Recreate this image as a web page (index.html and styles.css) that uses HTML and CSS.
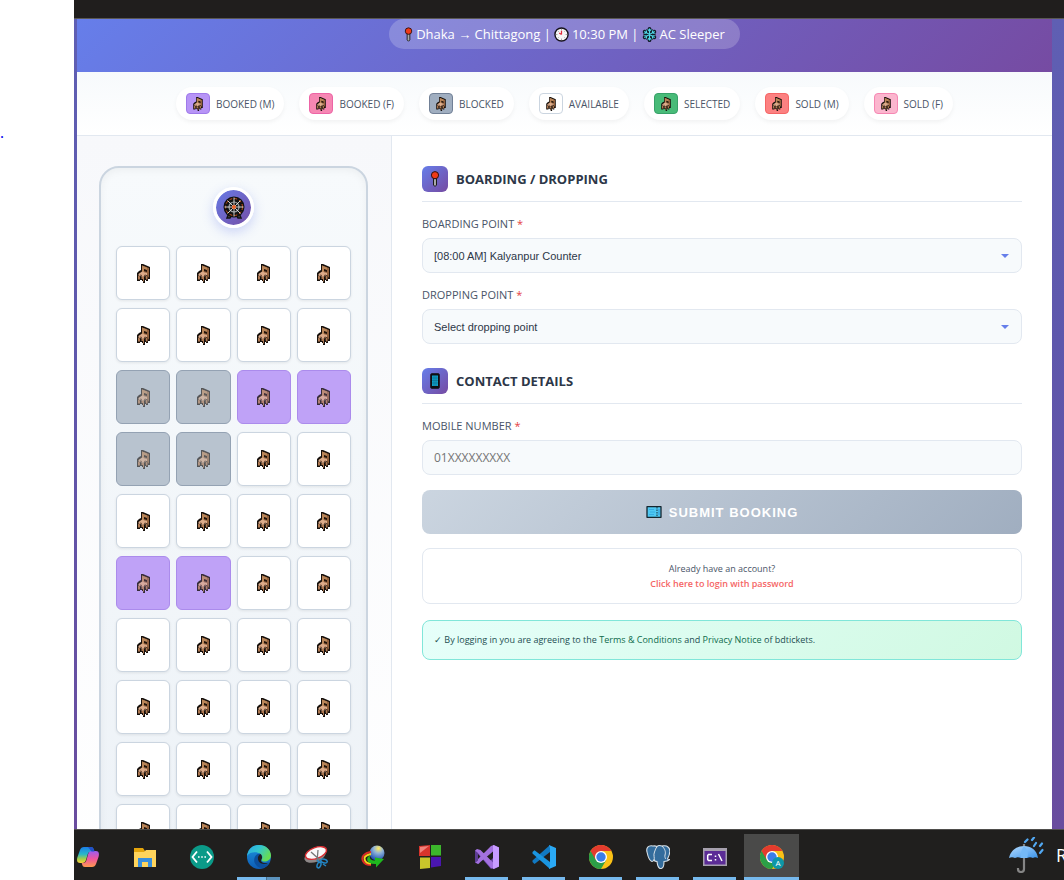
FILE: index.html
```html
<!DOCTYPE html>
<html lang="en">
<head>
<meta charset="utf-8">
<title>Seat booking</title>
<link rel="stylesheet" href="styles.css">
</head>
<body>
<svg class="defs" aria-hidden="true">
  <defs>
    <linearGradient id="copA" x1="0" y1="0" x2="0" y2="1"><stop offset="0" stop-color="#1b7ee8"/><stop offset=".45" stop-color="#27b7c9"/><stop offset=".75" stop-color="#a5cf45"/><stop offset="1" stop-color="#ffd23c"/></linearGradient>
    <linearGradient id="copB" x1="0" y1="0" x2="0" y2="1"><stop offset="0" stop-color="#9c5cf0"/><stop offset=".5" stop-color="#f0569c"/><stop offset="1" stop-color="#ff9a4d"/></linearGradient>
    <linearGradient id="edgeA" x1="0" y1="0" x2="1" y2=".5"><stop offset="0" stop-color="#2aa6e8"/><stop offset=".5" stop-color="#33c6cf"/><stop offset="1" stop-color="#66dd53"/></linearGradient>
    <linearGradient id="edgeB" x1="0" y1="0" x2="0" y2="1"><stop offset="0" stop-color="#1c93e0"/><stop offset="1" stop-color="#0d5cb4"/></linearGradient>
    <linearGradient id="umb" x1="0" y1="0" x2="1" y2="1"><stop offset="0" stop-color="#b5dcff"/><stop offset="1" stop-color="#3c94ea"/></linearGradient>
    <radialGradient id="globe" cx=".6" cy=".2" r=".8"><stop offset="0" stop-color="#ffe95e"/><stop offset=".4" stop-color="#8fb2d8"/><stop offset="1" stop-color="#1d4db0"/></radialGradient>
  </defs>
  <symbol id="chair" viewBox="0 0 13 19">
    <path d="M4 0h2l7 3v12h-2v2H9v-1H8v3H6v-2H5v-1H3v1H0v-8l2-2 2-1z" fill="#16100c"/>
    <path d="M5 1.500L12 4v10l-2-3-1-2-4-1z" fill="#93613c"/>
    <path d="M5 1.500l5 2v3L7 5v3H5z" fill="#b98558"/>
    <path d="M7 5l3 1v2L7 7z" fill="#20140c"/>
    <path d="M1.500 10L5 7.500l5 1.500v2l-4 2-4.500-1.500z" fill="#dcab89"/>
    <path d="M1 11.500l2 1v3H1zM4.500 13h2.500v4.500H6V15H4.500zM8.500 12.500l2-1v4H9z" fill="#ae7850"/>
    <path d="M3 11l2 .5M7 11.500l2-.5" stroke="#4c3020" stroke-width=".8"/>
  </symbol>
  <symbol id="pin" viewBox="0 0 10 16">
    <path d="M3.500 7h3v7L5 15.500 3.500 14z" fill="#a9a9a9" stroke="#1b1b1b"/>
    <circle cx="5" cy="4.200" r="3.600" fill="#f03a17" stroke="#2a1111"/>
  </symbol>
</svg>

<div class="page">
  <aside class="gutter"><a href="#top">.</a></aside>

  <div class="screen" id="top">
    <div class="topstrip"></div>

    <main class="viewport">
      <div class="card">
        <header class="hero">
          <div class="trip">
            <svg class="trip-pin"><use href="#pin"/></svg>
            <span>Dhaka → Chittagong |</span>
            <svg class="trip-icon" viewBox="0 0 16 16"><circle cx="8" cy="8" r="7" fill="#f5f5f5" stroke="#17131c" stroke-width="1.500"/><path d="M8 2.500v1M8 12.500v1M2.500 8h1M12.500 8h1M4.300 4.300l.5.5M11.300 11.300l.5.5M4.300 11.700l.5-.5M11.300 4.700l.5-.5" stroke="#777"/><path d="M8 8V4M8 8L5.500 6.500" stroke="#e02b3c" stroke-width="1.300"/></svg>
            <span>10:30 PM |</span>
            <svg class="trip-icon" viewBox="0 0 16 16"><g fill="none" stroke="#121a26" stroke-width="4" stroke-linecap="round"><path d="M8 2v12M2.800 5l10.400 6M13.200 5L2.800 11"/><circle cx="8" cy="8" r="4.500"/></g><g fill="none" stroke="#4fd6e6" stroke-width="1.200"><path d="M8 1.500v13M2.400 4.800l11.200 6.400M13.600 4.800L2.400 11.200M6 2.500l2 2 2-2M6 13.500l2-2 2 2M2.500 7l2.500-.8L4.500 3.500M13.500 9l-2.500.8.5 2.700M13.500 7L11 6.200l.5-2.700M2.500 9l2.500.8-.5 2.700"/></g></svg>
            <span>AC Sleeper</span>
          </div>
        </header>

        <ul class="legend">
          <li><span class="swatch booked-m"><svg><use href="#chair"/></svg></span>BOOKED (M)</li>
          <li><span class="swatch booked-f"><svg><use href="#chair"/></svg></span>BOOKED (F)</li>
          <li><span class="swatch blocked"><svg><use href="#chair"/></svg></span>BLOCKED</li>
          <li><span class="swatch available"><svg><use href="#chair"/></svg></span>AVAILABLE</li>
          <li><span class="swatch selected"><svg><use href="#chair"/></svg></span>SELECTED</li>
          <li><span class="swatch sold-m"><svg><use href="#chair"/></svg></span>SOLD (M)</li>
          <li><span class="swatch sold-f"><svg><use href="#chair"/></svg></span>SOLD (F)</li>
        </ul>

        <div class="content">
          <section class="seats-panel" aria-label="Seats">
            <div class="bus">
              <div class="wheel">
                <svg viewBox="0 0 22 24"><path d="M6 17l-2 5h3l2-4M16 17l2 5h-3l-2-4" fill="#555" stroke="#111" stroke-width="1.500"/><circle cx="11" cy="11" r="9.500" fill="#121212" stroke="#111" stroke-width="2"/><circle cx="11" cy="11" r="8.500" fill="none" stroke="#c9541c" stroke-dasharray="3 2"/><circle cx="11" cy="11" r="5" fill="none" stroke="#9aa0a5" stroke-width="1.200"/><path d="M11 1.500v19M1.500 11h19M4.500 4.500l13 13M17.500 4.500l-13 13" stroke="#e2e2e2" stroke-width=".9"/><circle cx="11" cy="11" r="2" fill="#f0642a"/></svg>
              </div>
              <div class="grid">
                <button class="seat" aria-label="A1"><svg><use href="#chair"/></svg></button>
                <button class="seat" aria-label="A2"><svg><use href="#chair"/></svg></button>
                <button class="seat" aria-label="A3"><svg><use href="#chair"/></svg></button>
                <button class="seat" aria-label="A4"><svg><use href="#chair"/></svg></button>
                <button class="seat" aria-label="B1"><svg><use href="#chair"/></svg></button>
                <button class="seat" aria-label="B2"><svg><use href="#chair"/></svg></button>
                <button class="seat" aria-label="B3"><svg><use href="#chair"/></svg></button>
                <button class="seat" aria-label="B4"><svg><use href="#chair"/></svg></button>
                <button class="seat blocked" aria-label="C1"><svg><use href="#chair"/></svg></button>
                <button class="seat blocked" aria-label="C2"><svg><use href="#chair"/></svg></button>
                <button class="seat booked-m" aria-label="C3"><svg><use href="#chair"/></svg></button>
                <button class="seat booked-m" aria-label="C4"><svg><use href="#chair"/></svg></button>
                <button class="seat blocked" aria-label="D1"><svg><use href="#chair"/></svg></button>
                <button class="seat blocked" aria-label="D2"><svg><use href="#chair"/></svg></button>
                <button class="seat" aria-label="D3"><svg><use href="#chair"/></svg></button>
                <button class="seat" aria-label="D4"><svg><use href="#chair"/></svg></button>
                <button class="seat" aria-label="E1"><svg><use href="#chair"/></svg></button>
                <button class="seat" aria-label="E2"><svg><use href="#chair"/></svg></button>
                <button class="seat" aria-label="E3"><svg><use href="#chair"/></svg></button>
                <button class="seat" aria-label="E4"><svg><use href="#chair"/></svg></button>
                <button class="seat booked-m" aria-label="F1"><svg><use href="#chair"/></svg></button>
                <button class="seat booked-m" aria-label="F2"><svg><use href="#chair"/></svg></button>
                <button class="seat" aria-label="F3"><svg><use href="#chair"/></svg></button>
                <button class="seat" aria-label="F4"><svg><use href="#chair"/></svg></button>
                <button class="seat" aria-label="G1"><svg><use href="#chair"/></svg></button>
                <button class="seat" aria-label="G2"><svg><use href="#chair"/></svg></button>
                <button class="seat" aria-label="G3"><svg><use href="#chair"/></svg></button>
                <button class="seat" aria-label="G4"><svg><use href="#chair"/></svg></button>
                <button class="seat" aria-label="H1"><svg><use href="#chair"/></svg></button>
                <button class="seat" aria-label="H2"><svg><use href="#chair"/></svg></button>
                <button class="seat" aria-label="H3"><svg><use href="#chair"/></svg></button>
                <button class="seat" aria-label="H4"><svg><use href="#chair"/></svg></button>
                <button class="seat" aria-label="I1"><svg><use href="#chair"/></svg></button>
                <button class="seat" aria-label="I2"><svg><use href="#chair"/></svg></button>
                <button class="seat" aria-label="I3"><svg><use href="#chair"/></svg></button>
                <button class="seat" aria-label="I4"><svg><use href="#chair"/></svg></button>
                <button class="seat" aria-label="J1"><svg><use href="#chair"/></svg></button>
                <button class="seat" aria-label="J2"><svg><use href="#chair"/></svg></button>
                <button class="seat" aria-label="J3"><svg><use href="#chair"/></svg></button>
                <button class="seat" aria-label="J4"><svg><use href="#chair"/></svg></button>
              </div>
            </div>
          </section>

          <form class="form-panel">
            <h2 class="section-title"><span class="title-icon"><svg class="title-pin"><use href="#pin"/></svg></span>BOARDING / DROPPING</h2>
            <div class="field">
              <label for="boarding">BOARDING POINT <span class="req">*</span></label>
              <div class="select-wrap"><select id="boarding" class="control"><option>[08:00 AM] Kalyanpur Counter</option></select></div>
            </div>
            <div class="field">
              <label for="dropping">DROPPING POINT <span class="req">*</span></label>
              <div class="select-wrap"><select id="dropping" class="control"><option>Select dropping point</option></select></div>
            </div>

            <h2 class="section-title second"><span class="title-icon"><svg class="title-phone" viewBox="0 0 10 16"><rect x=".7" y=".7" width="8.600" height="14.600" rx="1" fill="#0d0d12" stroke="#16161c"/><path d="M2 2.500h6v10.500H2z" fill="#10a0c8"/><path d="M4 2.500v10.500M6 2.500v10.500M2 5h6M2 7.500h6M2 10h6" stroke="#0b6f91" stroke-width=".6"/></svg></span>CONTACT DETAILS</h2>
            <div class="field">
              <label for="mobile">MOBILE NUMBER <span class="req">*</span></label>
              <input id="mobile" class="control mobile" type="tel" placeholder="01XXXXXXXXX">
            </div>

            <button type="button" class="submit"><svg viewBox="0 0 16 12"><path d="M1 .7h14v10.600H1z" fill="#4fc8f2" stroke="#15252e" stroke-width="1.300" stroke-linejoin="round"/><path d="M3 3.500h5M3 8.500h5M4 6h5" stroke="#2fa5e0" stroke-width=".8"/><path d="M11 1v10" stroke="#14313f" stroke-dasharray="1.500 1"/><path d="M13 3v6" stroke="#2f95d8"/></svg>SUBMIT BOOKING</button>

            <div class="login">Already have an account?<br><a href="#login">Click here to login with password</a></div>

            <p class="terms">✓ By logging in you are agreeing to the <a href="#terms">Terms &amp; Conditions</a> and <a href="#privacy">Privacy Notice</a> of bdtickets.</p>
          </form>
        </div>
      </div>
    </main>

    <footer class="taskbar">
      <nav class="apps">
        <button class="app" aria-label="Copilot"><svg viewBox="0 0 24 24"><path d="M8 2h7c2 0 2.500 1.500 3 3l.5 2h-4c-2 0-2.500 1-3 3l-1.500 5c-.7 2-1.500 3-4 3H4c-3 0-3.500-3-2.500-6L4 5c.7-2 2-3 4-3z" fill="url(#copA)"/><path d="M16 22H9c-2 0-2.500-1-3-3l-.3-1H7c2 0 3-1 3.500-3L12 9.500c.6-2 1.500-3.500 4-3.500h4c3 0 3.500 3 2.500 6L20 19c-.7 2-2 3-4 3z" fill="url(#copB)"/><path d="M12 2h3c2 0 2.500 1.500 3 3l.5 1.500h-3L12 2z" fill="#2350c8"/></svg></button>
        <button class="app" aria-label="Files"><svg viewBox="0 0 24 24"><path d="M1 3h9l2 3h11v15H1z" fill="#e5a50c"/><path d="M1 7h10l2-2h10v17H1z" fill="#ffd45c"/><path d="M5 22v-9h14v9h-4v-5H9v5z" fill="#3a8fdc"/></svg></button>
        <button class="app" aria-label="Code"><svg viewBox="0 0 24 24"><circle cx="12" cy="12" r="12" fill="#0b9a88"/><path d="M7 6.500L2.500 12 7 17.500M17 6.500l4.500 5.500-4.500 5.500" fill="none" stroke="#fff" stroke-width="1.800"/><path d="M8 12h1.600M11.200 12h1.600M14.400 12H16" stroke="#fff" stroke-width="1.600"/></svg></button>
        <button class="app running grouped" aria-label="Edge"><svg viewBox="0 0 24 24"><circle cx="12" cy="12" r="12" fill="url(#edgeB)"/><path d="M0 11C1 4 6 0 12 0c7 0 12 5 12 10.500 0 3.500-3 6-6 6-2.500 0-4-1-3.500-2 1.500-2 1-4-1-5.500C10 6.500 3 6.500 0 11z" fill="url(#edgeA)"/><path d="M13.500 9C9 7.500 5.500 14 8 18.500c1.500 3 4.500 5 8 4.500 3-.7 5-2.500 6.500-5-4 2.200-8 1-9.500-1-1.500-2-.5-4 .7-4.700.6-1 .5-2.300-.2-3.300z" fill="#0b4f9e"/><path d="M13.500 9c-2 1-3 3-2.500 5.500.7 3.500 4 5 8 4.500l3-1.500c-2.500 1-5 1-6.500 0-2-1-1.500-2.500-.8-3.500.8-1.500.3-3.800-1.200-5z" fill="#201e1d"/></svg></button>
        <button class="app" aria-label="Snipping tool"><svg viewBox="0 0 24 24"><ellipse cx="11" cy="11" rx="11" ry="6" transform="rotate(-20 11 11)" fill="#8d8787"/><ellipse cx="12" cy="8" rx="11" ry="5.500" transform="rotate(-20 12 8)" fill="#fafafa" stroke="#d72d32" stroke-width="1.400"/><path d="M7 7l10 9M14 5l-1 12" stroke="#777" stroke-width="1.300"/><g fill="none" stroke="#2386c6" stroke-width="1.500"><ellipse cx="15" cy="20" rx="1.800" ry="3" transform="rotate(20 15 20)"/><ellipse cx="20" cy="16" rx="3.300" ry="1.800" transform="rotate(15 20 16)"/><path d="M13 15l3 3M19 19l3 2"/></g></svg></button>
        <button class="app" aria-label="Download manager"><svg viewBox="0 0 24 24"><circle cx="16" cy="8" r="7.500" fill="url(#globe)"/><g fill="none" stroke-width="2"><path d="M10 7C3 8 0 12 2 16c1.500 3 4 4 8 4" stroke="#d92a24"/><path d="M10 9c-6 1-7.500 4-6 6.500C5 18 7 18.500 10 18.500" stroke="#f2d41e"/></g><path d="M9 10.500c-5 2-4 9 6 8.500v3.500l8-8.500-9-1.500v3c-4 0-6-2-5-5z" fill="#1fb81e"/></svg></button>
        <button class="app" aria-label="Colour squares"><svg viewBox="0 0 24 24"><path d="M1 1l11-1v11H1z" fill="#d8342c"/><path d="M13 0h10v10.500H13z" fill="#3cb62c"/><path d="M2 12.500h10V23L2 24z" fill="#c9c52b"/><path d="M13 12h10v9l-10 1.500z" fill="#4a16b0"/><path d="M2 2l9-1-9 7z" fill="#ef837c"/></svg></button>
        <button class="app running" aria-label="Visual Studio"><svg viewBox="0 0 24 24"><path d="M0 6l2.500-1.500L15 16l3-3v-4l2 12-4 3L3 9v6l3-2.500L4 19l-4-2z" fill="#6c46a8"/><path d="M0 17.500l3 1.500L18 6.500v11L5.500 5 2 4 0 5.500l2.500 2L16 23l3 1 5-2.500v-19L19 0l-3 1L2.500 14.500z" fill="#a371e0"/><path d="M18 0l6 2.500v19L18 24z" fill="#c79bff"/><path d="M0 6l3 2.500v7L0 18z" fill="#5d3d93"/></svg></button>
        <button class="app running" aria-label="Visual Studio Code"><svg viewBox="0 0 24 24"><path d="M18 0L.5 15.500v1.500L2.500 19 18 7z" fill="#1179c2"/><path d="M18 24L.5 8.500V7l2-1.800L18 17z" fill="#1a95e0"/><path d="M17 0l7 3v18l-7 3 1-3V3z" fill="#2aa9f5"/></svg></button>
        <button class="app running" aria-label="Chrome"><svg viewBox="0 0 24 24"><circle cx="12" cy="12" r="12" fill="#fbc116"/><path d="M1.600 6A12 12 0 0 0 12 24l5.200-9L12 12z" fill="#2c9f47"/><path d="M1.600 6A12 12 0 0 1 22.400 6H12l-5.200 9z" fill="#e33b2e"/><circle cx="12" cy="12" r="6" fill="#fff"/><circle cx="12" cy="12" r="4.700" fill="#3b7de8"/></svg></button>
        <button class="app running" aria-label="PostgreSQL"><svg viewBox="0 0 24 24"><path d="M7 1C2 0 0 3 1 7c1 5 3 9 5 9.500 1 0 2-1.500 2-1.500s.5 1.500 3 1.500c.5 3 .5 6 3 7 3 .5 4-2 4-7 2 0 4-.5 5.500-2-1 0-2 0-2-.5C24 9 24.500 4 22 2c-2-2-5-1-6-1-2-.6-4-.6-5 .5C10 1 8.500.8 7 1z" fill="#336c9c" stroke="#d8e1e8" stroke-width="1.100"/><path d="M8 15c1-2-1-5 .5-8 .5-2 1.500-4 2.500-5.500M16 1c3 3 4 6 3 9-.5 2 .5 3 .5 4" fill="none" stroke="#d8e1e8"/></svg></button>
        <button class="app running" aria-label="Command prompt"><svg viewBox="0 0 24 24"><path d="M0 3h24v18H0z" fill="#a6a0ae"/><path d="M1.500 6h21v13.500h-21z" fill="#5b2c96"/><path d="M9 9.500H5.500L4.700 10.500v4l.8 1H9M12.500 10.500V12M12.500 14v1.500M15.500 9l3.500 7" fill="none" stroke="#fff" stroke-width="1.500"/></svg></button>
        <button class="app running active" aria-label="Chrome profile"><svg viewBox="0 0 24 24"><circle cx="12" cy="12" r="12" fill="#fbc116"/><path d="M1.600 6A12 12 0 0 0 12 24l5.200-9L12 12z" fill="#2c9f47"/><path d="M1.600 6A12 12 0 0 1 22.400 6H12l-5.200 9z" fill="#e33b2e"/><circle cx="12" cy="12" r="6" fill="#fff"/><circle cx="12" cy="12" r="4.700" fill="#3b7de8"/><circle cx="18" cy="18" r="6" fill="#0d97a7"/><text x="18" y="21" class="badge-text">A</text></svg></button>
      </nav>
      <div class="weather">
        <svg viewBox="0 0 36 36"><path d="M15 7v25c0 4-6 4-6 0v-1" fill="none" stroke="#858585" stroke-width="2.200"/><path d="M0 21C2 13 8 9 15 9s13 4 14 12c-2-1-4-1-5 0-2-1-4-1-6 0-2-1-4-1-6 0-2-1-4-1-6 0-2-1-4-1-6 0z" fill="url(#umb)"/><path d="M12 21c-1-5 1-9 3-12 3 3 5 7 3 12" fill="#74b8f6"/><path d="M16 5l2.500-2.500M23 3l2-2.500M25 9l2-3M31 9l2-2.500M31 16l2.500-3" stroke="#52a8f2" stroke-width="2.200" stroke-linecap="round"/></svg>
        <span>R</span>
      </div>
    </footer>
  </div>
</div>
</body>
</html>
```
FILE: styles.css
```css
* { box-sizing: border-box; }

body {
  margin: 0;
  background: #fff;
  font-family: "Open Sans", "Noto Sans", sans-serif;
  color: #2d3748;
}

button { font: inherit; padding: 0; border: 0; background: none; cursor: pointer; }
a { text-decoration: none; }
.defs { position: absolute; width: 0; height: 0; }

.page { display: flex; height: 100vh; overflow: hidden; }

.gutter { flex: 0 0 74px; padding-top: 124px; font: 16px/18px "Liberation Serif", serif; }
.gutter a { color: #0000ee; }

.screen { flex: 1; min-width: 0; display: flex; flex-direction: column; overflow: hidden; }
.topstrip { flex: 0 0 19px; background: #201e1d; border-bottom: 1px solid #5a5854; }

.viewport {
  flex: 1;
  min-height: 0;
  overflow: hidden;
  padding: 0 12px 0 3px;
  background: linear-gradient(180deg, #5f5fb3, #5e57ac 40%, #694c9e);
}
.card { background: #fff; }

.hero {
  display: flex;
  justify-content: center;
  padding-bottom: 23px;
  background: linear-gradient(135deg, #667eea, #764ba2);
}
.trip {
  display: flex;
  align-items: center;
  gap: 3px;
  height: 30px;
  padding: 0 15px;
  border-radius: 20px;
  background: rgba(255, 255, 255, .2);
  color: #fff;
  font-size: 13px;
}
.trip-pin { width: 9px; height: 15px; }
.trip-icon { width: 15px; height: 15px; }

.legend {
  display: flex;
  flex-wrap: wrap;
  justify-content: center;
  gap: 15px;
  margin: 0;
  padding: 15px;
  list-style: none;
  background: linear-gradient(180deg, #f7fafc, #fff);
  border-bottom: 1px solid #e2e8f0;
}
.legend li {
  display: flex;
  align-items: center;
  gap: 6px;
  padding: 6px 10px;
  border-radius: 20px;
  background: #fff;
  box-shadow: 0 2px 4px rgba(0, 0, 0, .05);
  color: #4a5568;
  font-size: 10px;
  font-weight: 500;
}
.swatch {
  display: flex;
  align-items: center;
  justify-content: center;
  width: 24px;
  height: 21px;
  border: 1px solid #cbd5e0;
  border-radius: 4px;
  background: #fff;
}
.swatch svg { width: 10px; height: 14px; }

.booked-m { background: #b794f6; border-color: #9f7aea; }
.booked-f { background: #f687b3; border-color: #ed64a6; }
.blocked { background: #a0aec0; border-color: #718096; }
.selected { background: #48bb78; border-color: #38a169; }
.sold-m { background: #fc8181; border-color: #f56565; }
.sold-f { background: #fbb6ce; border-color: #f687b3; }

.content { display: flex; align-items: stretch; }
.seats-panel {
  flex: 0 0 315px;
  padding: 30px 23px 30px 22px;
  border-right: 1px solid #e2e8f0;
  background: linear-gradient(180deg, #f7f8fb, #fff);
}
.bus {
  padding: 19px 15px 15px;
  border: 2px solid #cbd5e0;
  border-radius: 20px;
  background: linear-gradient(180deg, #f7fafc, #edf2f7);
  box-shadow: inset 0 2px 8px rgba(0, 0, 0, .05);
}
.wheel {
  display: flex;
  align-items: center;
  justify-content: center;
  width: 41px;
  height: 41px;
  margin: 0 auto 18px;
  border: 3px solid #fff;
  border-radius: 50%;
  background: linear-gradient(135deg, #667eea, #764ba2) border-box;
  background-clip: padding-box;
  box-shadow: 0 4px 12px rgba(102, 126, 234, .3);
}
.wheel svg { width: 22px; height: 24px; }

.grid { display: grid; grid-template-columns: repeat(4, 1fr); grid-auto-rows: 54px; gap: 8px 6px; }
.seat {
  display: flex;
  align-items: center;
  justify-content: center;
  border: 1px solid #cbd5e0;
  border-radius: 6px;
  background: #fff;
  box-shadow: 0 1px 3px rgba(0, 0, 0, .08);
}
.seat svg { width: 13px; height: 19px; }
.seat.booked-m { background: #bfa2f7; border-color: #ab8bec; box-shadow: none; }
.seat.booked-m svg { opacity: .8; }
.seat.blocked { background: #b8c3cf; border-color: #94a2b3; box-shadow: none; }
.seat.blocked svg { opacity: .6; }

.form-panel { flex: 1; min-width: 0; padding: 30px; }
.section-title {
  display: flex;
  align-items: center;
  gap: 8px;
  margin: 0 0 15px;
  padding-bottom: 9px;
  border-bottom: 1px solid #e2e8f0;
  font-size: 13px;
  line-height: 20px;
  font-weight: 700;
}
.section-title.second { margin-top: 24px; }
.title-icon {
  display: flex;
  align-items: center;
  justify-content: center;
  width: 26px;
  height: 26px;
  border-radius: 6px;
  background: linear-gradient(135deg, #667eea, #764ba2);
}
.title-pin, .title-phone { width: 10px; height: 16px; }

.field { margin-bottom: 15px; }
.field label {
  display: block;
  margin-bottom: 7px;
  color: #4a5568;
  font-size: 11px;
  line-height: 14px;
}
.req { color: #e53e3e; }
.control {
  display: block;
  width: 100%;
  height: 35px;
  padding: 0 11px;
  border: 1px solid #e2e8f0;
  border-radius: 8px;
  background: #f7fafc;
  color: #2d3748;
  font: 11px "Liberation Sans", Arial, sans-serif;
  appearance: none;
}
.control.mobile { font: 12px "Open Sans", sans-serif; }
.control::placeholder { color: #757575; }
.select-wrap { position: relative; }
.select-wrap::after {
  content: "";
  position: absolute;
  right: 13px;
  top: 16px;
  border: 4px solid transparent;
  border-top-color: #667eea;
  border-bottom: 0;
  pointer-events: none;
}

.submit {
  display: flex;
  align-items: center;
  justify-content: center;
  gap: 7px;
  width: 100%;
  height: 44px;
  border-radius: 8px;
  background: linear-gradient(135deg, #cbd5e0, #a0aec0);
  color: #fff;
  font: bold 13px "Liberation Sans", Arial, sans-serif;
  letter-spacing: 1px;
}
.submit svg { width: 16px; height: 12px; }

.login {
  margin: 14px 0 16px;
  padding: 12px;
  border: 1px solid #e2e8f0;
  border-radius: 8px;
  color: #4a5568;
  font-size: 9px;
  line-height: 15px;
  text-align: center;
}
.login a { color: #f56565; font-weight: 600; }

.terms {
  margin: 0;
  padding: 12px 11px;
  border: 1px solid #81e6d9;
  border-radius: 8px;
  background: linear-gradient(135deg, #e6fffa, #d0f9e2);
  color: #234e52;
  font-size: 9px;
  line-height: 14px;
}
.terms a { color: #0f6b4c; }

.taskbar {
  flex: 0 0 51px;
  display: flex;
  justify-content: space-between;
  overflow: hidden;
  border-top: 1px solid #4f4e4c;
  background: #201f1e;
}
.apps { display: flex; gap: 2px; margin-left: -14px; padding-top: 4px; }
.app {
  display: flex;
  align-items: center;
  justify-content: center;
  width: 55px;
  background: no-repeat center bottom / 43px 3px;
}
.app svg { width: 24px; height: 24px; }
.app.running { background-image: linear-gradient(#76b9ed, #76b9ed); }
.app.grouped { background-image: linear-gradient(90deg, #76b9ed 29px, #47718f 29px, #47718f 30px, #5c93bd 30px); }
.app.active { background-color: #4a4a49; background-size: 100% 3px; }
.badge-text { fill: #fff; font: 8px "Open Sans", sans-serif; text-anchor: middle; }

.weather {
  display: flex;
  align-items: center;
  gap: 11px;
  width: 55px;
  color: #fff;
  font-size: 18px;
}
.weather svg { flex: 0 0 36px; width: 36px; height: 36px; }
```
